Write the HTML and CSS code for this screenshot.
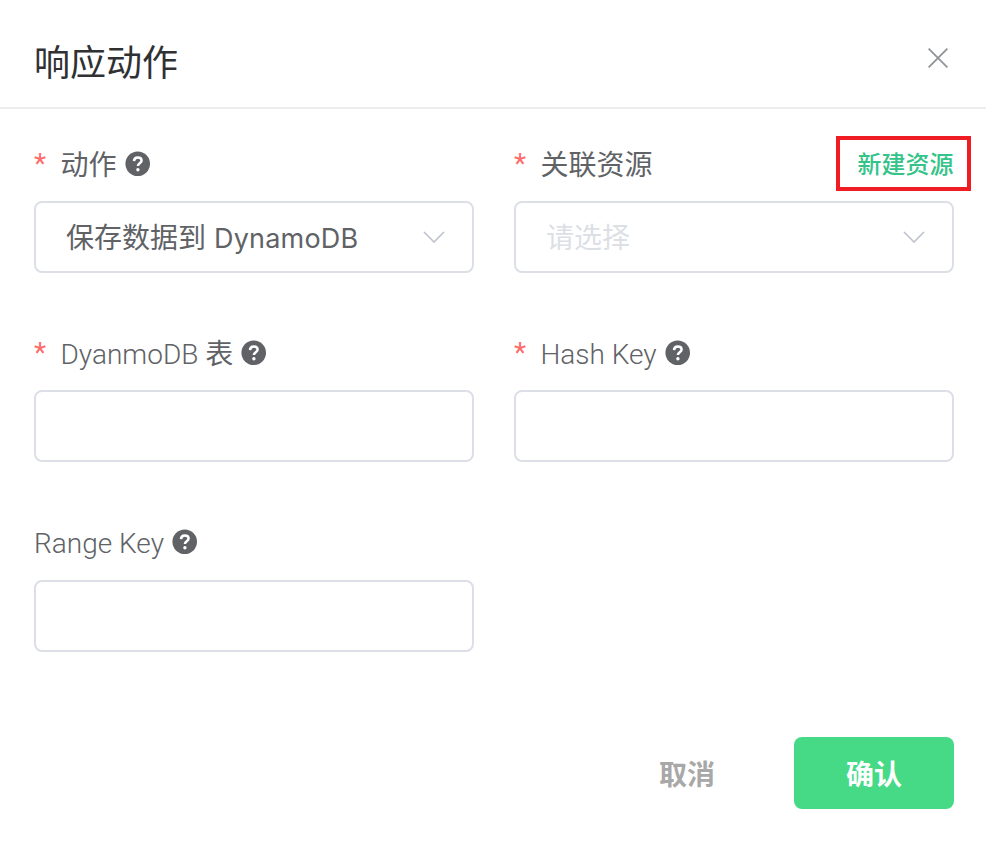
FILE: index.html
```html
<!DOCTYPE html>
<html lang="zh-CN">
<head>
<meta charset="utf-8">
<title>响应动作</title>
<link rel="stylesheet" href="styles.css">
</head>
<body>
<svg class="defs" width="0" height="0" aria-hidden="true">
  <symbol id="help" viewBox="0 0 26 26">
    <circle cx="12.700" cy="12.800" r="12.300" fill="#606266"/>
    <path d="M9 10.100C9.100 7.600 10.700 6.400 12.800 6.400c2.200 0 3.800 1.300 3.800 3.200 0 2.700-3.700 2.800-3.700 5.400" fill="none" stroke="#fff" stroke-width="2.500"/>
    <circle cx="12.900" cy="18.800" r="1.700" fill="#fff"/>
  </symbol>
  <symbol id="chevron" viewBox="0 0 22 12">
    <path d="M1 1l10 10L21 1" fill="none" stroke="#c0c4cc" stroke-width="1.700"/>
  </symbol>
</svg>
<main class="dialog">
  <header class="header">
    <h1 class="title">响应动作</h1>
    <svg class="close" viewBox="0 0 20 20"><path d="M.6.6l18.800 18.800M19.400.6L.6 19.400" stroke="#909399" stroke-width="1.800"/></svg>
  </header>
  <form class="form">
    <div class="field">
      <div class="label"><span class="star">*</span><span class="cjk">动作</span><svg class="help"><use href="#help"/></svg></div>
      <div class="control"><span class="value">保存数据到 <span class="latin">DynamoDB</span></span><svg class="chevron"><use href="#chevron"/></svg></div>
    </div>
    <div class="field">
      <div class="label"><span class="star">*</span><span class="cjk">关联资源</span><a class="create"><span>新建资源</span></a></div>
      <div class="control"><span class="value placeholder">请选择</span><svg class="chevron"><use href="#chevron"/></svg></div>
    </div>
    <div class="field">
      <div class="label"><span class="star">*</span><span class="name">DyanmoDB <span class="zh">表</span></span><svg class="help"><use href="#help"/></svg></div>
      <div class="control"></div>
    </div>
    <div class="field">
      <div class="label"><span class="star">*</span><span class="name">Hash Key</span><svg class="help"><use href="#help"/></svg></div>
      <div class="control"></div>
    </div>
    <div class="field">
      <div class="label"><span class="name">Range Key</span><svg class="help"><use href="#help"/></svg></div>
      <div class="control"></div>
    </div>
  </form>
  <footer class="footer">
    <span class="cancel">取消</span>
    <span class="confirm">确认</span>
  </footer>
</main>
</body>
</html>
```

FILE: styles.css
```css
* { box-sizing: border-box; }
body {
  margin: 0;
  background: #fff;
  color: #606266;
  font: 28px/40px Roboto, "Noto Sans CJK SC", sans-serif;
}
.defs { position: absolute; }
.dialog { height: 844px; overflow: hidden; }
.header {
  display: flex;
  justify-content: space-between;
  height: 109px;
  padding: 36px 38px 0 34px;
  border-bottom: 2px solid #ededed;
}
.title {
  margin: 0;
  padding-top: 2px;
  color: #303133;
  font-size: 36px;
  font-weight: 400;
  line-height: 52px;
}
.close { width: 20px; height: 20px; margin-top: 12px; }
.form {
  display: grid;
  grid-template-columns: 440px 440px;
  grid-auto-rows: 142px;
  gap: 47.400px 40px;
  padding: 22px 32px 0 34px;
}
.label {
  display: flex;
  align-items: center;
  height: 70px;
  padding-bottom: 5px;
  font-weight: 300;
}
.star { width: 26.500px; padding-top: 1px; color: #ff6b6b; font-weight: 400; }
.cjk { padding-top: 4px; font-weight: 400; }
.name { padding-top: 4px; }
.zh { font-weight: 400; }
.help { width: 26px; height: 26px; margin-left: 8px; }
.create {
  display: flex;
  align-items: center;
  justify-content: center;
  height: 55px;
  width: 135px;
  margin-left: auto;
  margin-right: -17px;
  padding: 3px 0 0 4px;
  border: 4px solid #f01c24;
  color: #34c388;
  font-size: 24px;
  font-weight: 500;
}
.control {
  display: flex;
  align-items: center;
  justify-content: space-between;
  height: 72px;
  padding: 0 27px 0 30px;
  border: 2px solid #dcdfe6;
  border-radius: 8px;
}
.value { padding-top: 4px; }
.latin { margin-left: 1px; font-family: Inter, sans-serif; font-size: 27px; line-height: 1; letter-spacing: .200px; }
.placeholder { color: #dcdfe6; }
.chevron { width: 22px; height: 12px; }
.footer {
  display: flex;
  align-items: center;
  justify-content: flex-end;
  gap: 79px;
  padding: 85.300px 32px 0;
  font-weight: 700;
}
.cancel { padding-top: 5px; color: #a8a8a8; }
.confirm {
  width: 160px;
  height: 72px;
  padding-top: 3px;
  border-radius: 8px;
  background: #46da87;
  color: #fff;
  line-height: 72px;
  text-align: center;
}
```
